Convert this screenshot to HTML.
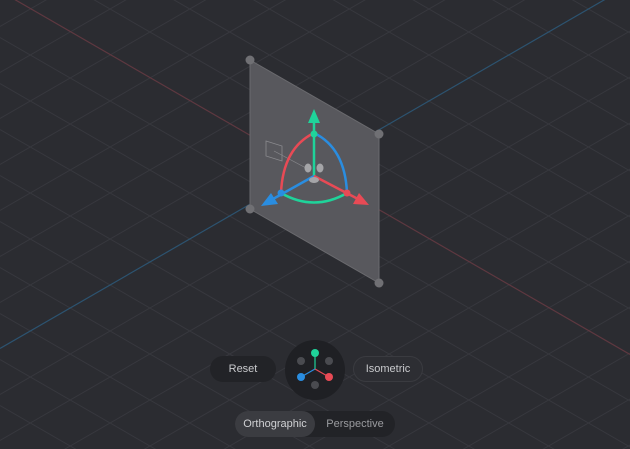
<!DOCTYPE html>
<html><head><style>
html,body{margin:0;width:630px;height:449px;overflow:hidden}
body{background:#2b2c31;font-family:"Liberation Sans",sans-serif;position:relative}
svg{position:absolute;left:0;top:0}
.pill{position:absolute;height:26px;border-radius:13px;color:#c9cacd;font-size:11px;line-height:26px;text-align:center}
</style></head><body>
<svg width="630" height="449">
<g stroke="#37383e" stroke-width="1">
<line x1="0" y1="-376.5" x2="630" y2="-13"/><line x1="0" y1="-330.5" x2="630" y2="33"/><line x1="0" y1="-284.5" x2="630" y2="79"/><line x1="0" y1="-238.5" x2="630" y2="125"/><line x1="0" y1="-192.5" x2="630" y2="171"/><line x1="0" y1="-146.5" x2="630" y2="217"/><line x1="0" y1="-100.5" x2="630" y2="263"/><line x1="0" y1="-54.5" x2="630" y2="309"/><line x1="0" y1="37.5" x2="630" y2="401"/><line x1="0" y1="83.5" x2="630" y2="447"/><line x1="0" y1="129.5" x2="630" y2="493"/><line x1="0" y1="175.5" x2="630" y2="539"/><line x1="0" y1="221.5" x2="630" y2="585"/><line x1="0" y1="267.5" x2="630" y2="631"/><line x1="0" y1="313.5" x2="630" y2="677"/><line x1="0" y1="359.5" x2="630" y2="723"/><line x1="0" y1="405.5" x2="630" y2="769"/>
<line x1="0" y1="26.5" x2="630" y2="-337"/><line x1="0" y1="72.5" x2="630" y2="-291"/><line x1="0" y1="118.5" x2="630" y2="-245"/><line x1="0" y1="164.5" x2="630" y2="-199"/><line x1="0" y1="210.5" x2="630" y2="-153"/><line x1="0" y1="256.5" x2="630" y2="-107"/><line x1="0" y1="302.5" x2="630" y2="-61"/><line x1="0" y1="394.5" x2="630" y2="31"/><line x1="0" y1="440.5" x2="630" y2="77"/><line x1="0" y1="486.5" x2="630" y2="123"/><line x1="0" y1="532.5" x2="630" y2="169"/><line x1="0" y1="578.5" x2="630" y2="215"/><line x1="0" y1="624.5" x2="630" y2="261"/><line x1="0" y1="670.5" x2="630" y2="307"/><line x1="0" y1="716.5" x2="630" y2="353"/><line x1="0" y1="762.5" x2="630" y2="399"/><line x1="0" y1="808.5" x2="630" y2="445"/>
</g>
<line x1="0" y1="-9" x2="630" y2="354.5" stroke="#5e3840" stroke-width="1.2"/>
<line x1="0" y1="348.5" x2="630" y2="-15" stroke="#2c5370" stroke-width="1.2"/>
<polygon points="250,60 379,134 379,283 250,209" fill="#58585d" stroke="#6a6a6e" stroke-width="1"/>
<g fill="#707074">
<circle cx="250" cy="60" r="4.5"/><circle cx="379" cy="134" r="4.5"/><circle cx="379" cy="283" r="4.5"/><circle cx="250" cy="209" r="4.5"/>
</g>
<polygon points="266,141 282,146 282,161 266,156" fill="none" stroke="#8a8a8e" stroke-width="0.8"/>
<line x1="274" y1="151" x2="306" y2="168" stroke="#8a8a8e" stroke-width="0.7"/>
<g fill="none" stroke-width="2.5">
<path d="M314,133 Q283,148 281,193" stroke="#e84a55"/>
<path d="M314,133 Q345,148 347,193" stroke="#2a8de0"/>
<path d="M281,193 Q314,212 347,193" stroke="#1fd39a"/>
<line x1="314" y1="176" x2="314" y2="122" stroke="#1fd39a"/>
<line x1="314" y1="176" x2="273" y2="199" stroke="#2a8de0"/>
<line x1="314" y1="176" x2="358" y2="199" stroke="#e84a55"/>
</g>
<polygon points="314,109 320,123 308,123" fill="#1fd39a"/>
<polygon points="261,206 271,193 278,204" fill="#2a8de0"/>
<polygon points="369,205 353,204 359,193" fill="#e84a55"/>
<circle cx="314" cy="134" r="3.5" fill="#1fd39a"/>
<circle cx="281" cy="193" r="3.5" fill="#2a8de0"/>
<circle cx="347" cy="193" r="3.5" fill="#e84a55"/>
<g fill="#a5a5a8"><ellipse cx="308" cy="168" rx="3.5" ry="4.5"/><ellipse cx="320" cy="168" rx="3.5" ry="4.5"/><ellipse cx="314" cy="180" rx="5" ry="3"/></g>
<circle cx="315" cy="370" r="30" fill="#1f2024"/>
<g stroke-width="1.2"><line x1="315" y1="369" x2="315" y2="354" stroke="#1fd39a"/><line x1="315" y1="369" x2="301" y2="377" stroke="#2a8de0"/><line x1="315" y1="369" x2="329" y2="377" stroke="#e84a55"/></g>
<g fill="#4a4b50"><circle cx="301" cy="361" r="4"/><circle cx="329" cy="361" r="4"/><circle cx="315" cy="385" r="4"/></g>
<circle cx="315" cy="353" r="4" fill="#1fd39a"/><circle cx="301" cy="377" r="4" fill="#2a8de0"/><circle cx="329" cy="377" r="4" fill="#e84a55"/>
</svg>
<div class="pill" style="left:210px;top:356px;width:66px;background:#222327">Reset</div>
<div class="pill" style="left:353px;top:356px;width:68px;border:1px solid #3a3b40;height:24px;line-height:24px;background:#2d2e33">Isometric</div>
<div class="pill" style="left:235px;top:411px;width:160px;background:#222327"></div>
<div class="pill" style="left:235px;top:411px;width:80px;background:#3b3c41;color:#d0d1d4">Orthographic</div>
<div class="pill" style="left:315px;top:411px;width:80px;color:#9a9b9f">Perspective</div>
</body></html>
